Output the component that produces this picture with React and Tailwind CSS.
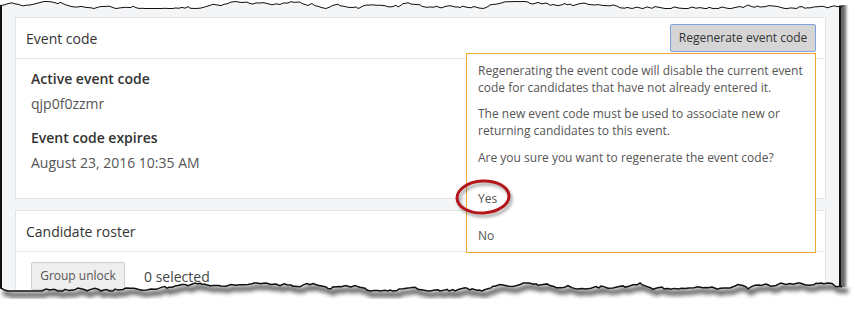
import React from 'react'

const FONT = { fontFamily: '"Open Sans", "Noto Sans", sans-serif' }

// torn paper edges, seeded so they look the same each render
function jagged(seed, y0, amp, x0, x1) {
  let s = seed
  const rand = () => (s = (s * 9301 + 49297) % 233280) / 233280
  const pts = []
  let y = y0
  for (let x = x0; x <= x1; x += 2 + Math.floor(rand() * 4)) {
    y += (rand() - 0.5) * amp
    y = Math.max(y0 - amp, Math.min(y0 + amp, y))
    pts.push([x, +y.toFixed(1)])
  }
  pts.push([x1, y0])
  return pts
}

const TOP = jagged(11, 5, 3.5, 0, 842)
const BOTTOM = jagged(37, 287, 4, 0, 842)

function TornEdges() {
  const topLine = TOP.map(p => p.join(',')).join(' L')
  const botLine = BOTTOM.map(p => p.join(',')).join(' L')
  const shadowLine = BOTTOM.map(p => `${p[0] + 3},${p[1] + 4}`).join(' L')
  return (
    <svg className="absolute inset-0 pointer-events-none" width="857" height="310">
      <defs>
        <filter id="blur" x="-10%" y="-50%" width="120%" height="200%">
          <feGaussianBlur stdDeviation="2" />
        </filter>
        <clipPath id="below">
          <path d={`M${botLine} L857,${BOTTOM[BOTTOM.length - 1][1]} L857,310 L0,310 Z`} />
        </clipPath>
      </defs>
      <path d={`M0,0 L857,0 L857,${TOP[TOP.length - 1][1]} L${[...TOP].reverse().map(p => p.join(',')).join(' L')} Z`} fill="#fff" />
      <path d={`M${topLine}`} fill="none" stroke="#111" strokeWidth="1" />
      <path d={`M${botLine} L857,287 L857,310 L0,310 Z`} fill="#fff" />
      <g clipPath="url(#below)">
        <path d={`M${shadowLine} L848,290`} fill="none" stroke="#444" strokeWidth="5" filter="url(#blur)" opacity="0.85" />
      </g>
      <path d={`M${botLine}`} fill="none" stroke="#111" strokeWidth="1.5" />
    </svg>
  )
}

function Card({ title, right, children, className = '' }) {
  return (
    <div className={`relative bg-white border border-[#e3e4e6] ${className}`}>
      <div className="h-[41px] border-b border-[#e6e7e9] flex items-center justify-between pl-[10px] pr-[9px]">
        <span className="text-[14px] text-[#333]">{title}</span>
        {right}
      </div>
      {children}
    </div>
  )
}

export default function App() {
  return (
    <div className="relative w-[857px] h-[310px] bg-white overflow-hidden" style={FONT}>
      <div className="w-[841px] h-[300px] bg-[#f4f5f7] border-l-2 border-r-2 border-[#111] pt-[17px] px-[13px] shadow-[5px_3px_3px_rgba(0,0,0,0.6)]">
        <Card
          title="Event code"
          className="z-10"
          right={
            <button className="h-[28px] w-[146px] bg-[#d5d5d5] border border-[#7ea2de] rounded-[2px] text-[12px] text-[#333]">
              Regenerate event code
            </button>
          }
        >
          <div className="pt-[10px] pb-[25px] px-[15px] text-[14px] leading-[20px]">
            <div className="font-semibold text-[#333]">Active event code</div>
            <div className="mt-[5px] text-[#555]">qjp0f0zzmr</div>
            <div className="mt-[14px] font-semibold text-[#333]">Event code expires</div>
            <div className="mt-[5px] text-[#555]">August 23, 2016 10:35 AM</div>
          </div>

          <div className="absolute left-[450px] top-[35px] w-[350px] h-[200px] bg-white border border-[#f2a72e] pt-[8px] px-[11px] text-[12px] leading-[17px] text-[#555]">
            <p>Regenerating the event code will disable the current event code for candidates that have not already entered it.</p>
            <p className="mt-[9px]">The new event code must be used to associate new or returning candidates to this event.</p>
            <p className="mt-[10px]">Are you sure you want to regenerate the event code?</p>
            <p className="mt-[24px]">Yes</p>
            <p className="mt-[20px]">No</p>
            <svg className="absolute left-[-12px] top-[122px]" width="64" height="46" viewBox="0 0 64 46">
              <defs>
                <filter id="ring" x="-20%" y="-30%" width="140%" height="160%">
                  <feGaussianBlur stdDeviation="1.5" />
                </filter>
              </defs>
              <ellipse cx="30" cy="24" rx="26" ry="16" fill="none" stroke="#000" strokeOpacity="0.35" strokeWidth="3" filter="url(#ring)" transform="rotate(-3 30 24)" />
              <ellipse cx="28" cy="21" rx="26" ry="16" fill="none" stroke="#b3161b" strokeWidth="3" transform="rotate(-3 28 21)" />
            </svg>
          </div>
        </Card>

        <Card title="Candidate roster" className="mt-[11px]">
          <div className="pt-[10px] px-[15px] flex items-center gap-[19px]">
            <button className="h-[28px] w-[94px] bg-[#eeeeee] border border-[#cfcfcf] rounded-[2px] text-[12px] text-[#555]">
              Group unlock
            </button>
            <span className="text-[14px] text-[#444]">0 selected</span>
          </div>
        </Card>
      </div>
      <TornEdges />
    </div>
  )
}
